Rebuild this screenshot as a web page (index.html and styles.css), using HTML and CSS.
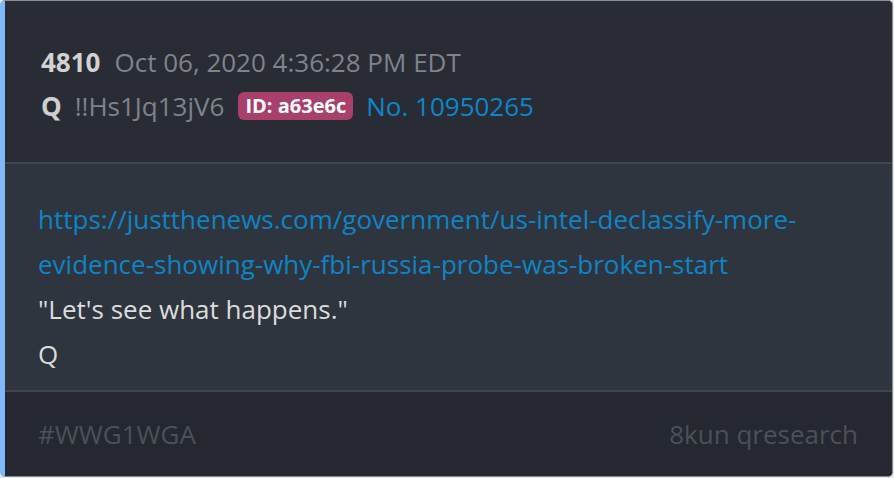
FILE: index.html
```html
<!DOCTYPE html>
<html>
<head>
<meta charset="utf-8">
<link rel="stylesheet" href="styles.css">
</head>
<body>
<div class="card">
  <div class="header">
    <div class="row"><span class="num">4810</span><span class="date">Oct 06, 2020 4:36:28 PM EDT</span></div>
    <div class="row"><span class="name">Q</span><span class="trip">!!Hs1Jq13jV6</span><span class="badge">ID: a63e6c</span><span class="postno">No. 10950265</span></div>
  </div>
  <div class="content">
    <div class="line"><a class="link" href="#">https://justthenews.com/government/us-intel-declassify-more-<br>evidence-showing-why-fbi-russia-probe-was-broken-start</a></div>
    <div class="line">"Let's see what happens."</div>
    <div class="line">Q</div>
  </div>
  <div class="footer">
    <span class="tag">#WWG1WGA</span>
    <span class="src">8kun qresearch</span>
  </div>
</div>
</body>
</html>
```

FILE: styles.css
```css
html, body {
  margin: 0;
  padding: 0;
  background: #e6e7e9;
}
body {
  font-family: "Open Sans", "DejaVu Sans", sans-serif;
  font-size: 26px;
}
.card {
  box-sizing: border-box;
  width: 893px;
  height: 477px;
  margin: 0;
  border: 1px solid #8a8e95;
  border-left: 5px solid #7fbaf7;
  border-radius: 5px;
  overflow: hidden;
  display: flex;
  flex-direction: column;
  background: #2f353e;
}
.header {
  background: #292c34;
  padding: 39px 0 34px 36px;
  border-bottom: 2px solid #41454d;
}
.row {
  display: flex;
  align-items: center;
  line-height: 44px;
  white-space: nowrap;
}
.num {
  font-weight: 700;
  color: #d2d2d2;
  margin-right: 14px;
}
.date {
  color: #7e838c;
}
.name {
  font-weight: 700;
  color: #cfcfcf;
  margin-right: 13px;
}
.trip {
  color: #7e838c;
  margin-right: 14px;
}
.badge {
  background: #a8406b;
  color: #ffffff;
  font-weight: 700;
  font-size: 20px;
  line-height: 28px;
  padding: 0 7px;
  border-radius: 6px;
  margin-right: 13px;
}
.postno {
  color: #0a88cb;
}
.content {
  flex: 1;
  padding: 33px 0 0 33px;
  color: #dcdcdc;
  border-bottom: 2px solid #41454d;
}
.line {
  line-height: 45px;
}
.link {
  color: #0e84c6;
  text-decoration: none;
}
.footer {
  background: #252830;
  height: 84px;
  display: flex;
  justify-content: space-between;
  align-items: center;
  padding: 0 34px 0 33px;
  color: #4b5059;
}
```
